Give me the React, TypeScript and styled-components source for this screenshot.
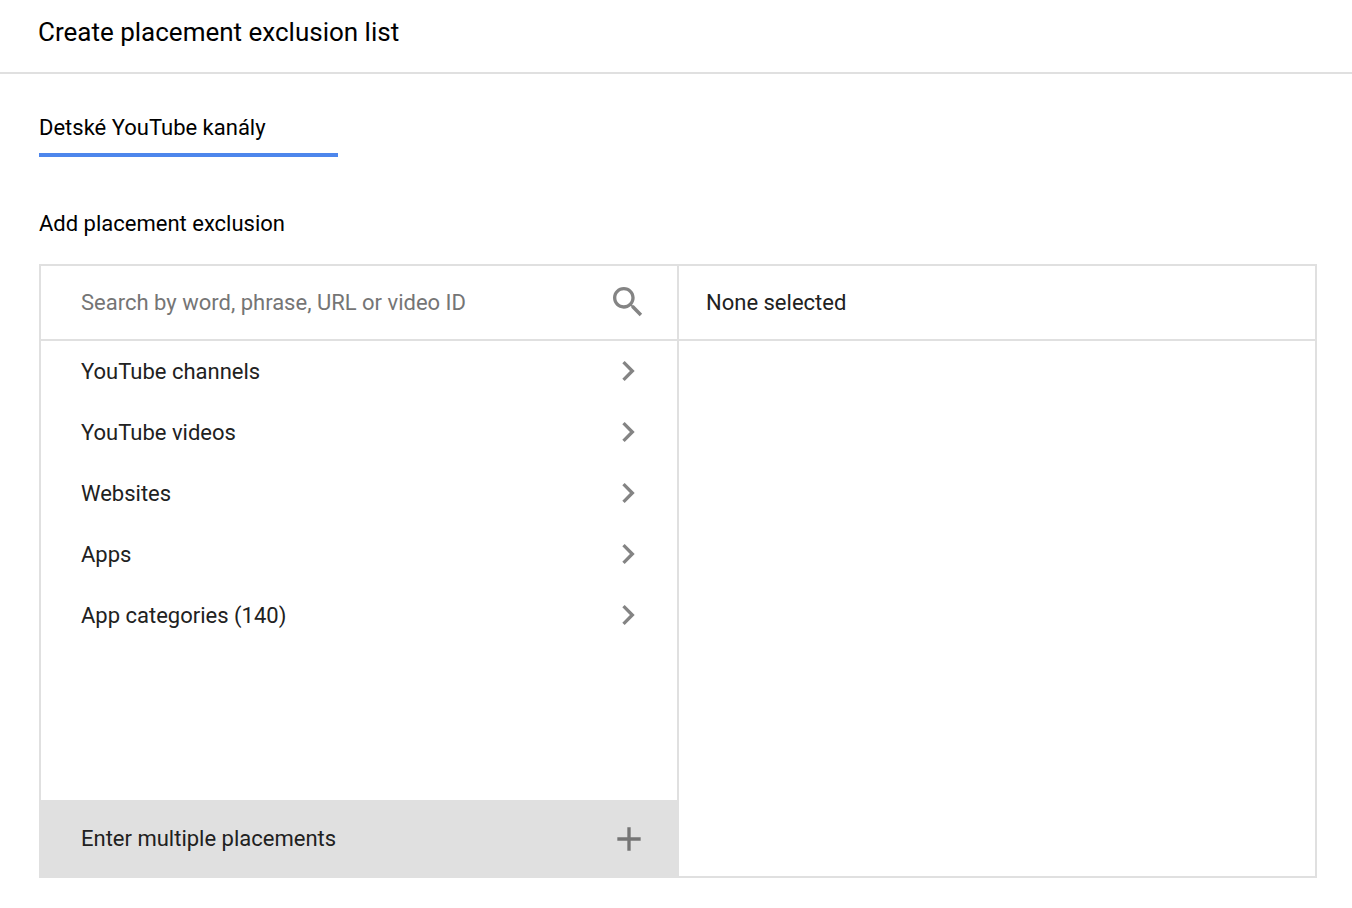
import React from "react";
import styled, { createGlobalStyle } from "styled-components";

const GlobalStyle = createGlobalStyle`
  *, *::before, *::after { box-sizing: border-box; }
  body { margin: 0; background: #fff; color: #212121; font-family: Roboto, sans-serif; font-size: 22px; line-height: 28px; }
  h1, h2, ul { margin: 0; padding: 0; }
  button, input { font: inherit; color: inherit; letter-spacing: inherit; }
`;

const Header = styled.header`
  padding: 16px 38px 24px;
  border-bottom: 2px solid #e0e0e0;
`;

const Title = styled.h1`
  color: #000;
  font-size: 26px;
  font-weight: 400;
  line-height: 32px;
`;

const Main = styled.main`
  padding: 35px 35px 30px 39px;
`;

const NameInput = styled.input`
  display: block;
  width: 299px;
  height: 48px;
  padding: 0 0 8px;
  border: 0;
  border-bottom: 4px solid #4d86ec;
  border-radius: 0;
  outline: none;
  background: transparent;
  color: #000;
`;

const SectionTitle = styled.h2`
  margin: 53px 0 26px;
  color: #000;
  font-size: 22px;
  font-weight: 400;
`;

const Picker = styled.section`
  display: grid;
  grid-template-columns: 1fr 1fr;
  gap: 2px;
  border: 2px solid #e0e0e0;
  background: #e0e0e0;
`;

const Pane = styled.div`
  display: flex;
  flex-direction: column;
  min-width: 0;
  background: #fff;
`;

const PaneHeader = styled.div<{ $inset: number }>`
  display: flex;
  align-items: center;
  height: 75px;
  padding: 0 29px 0 ${(p) => p.$inset}px;
  border-bottom: 2px solid #e0e0e0;
`;

const SearchInput = styled.input`
  flex: 1;
  min-width: 0;
  padding: 0;
  border: 0;
  outline: none;
  background: transparent;

  &::placeholder { color: #757575; opacity: 1; }
`;

const IconButton = styled.button`
  display: flex;
  padding: 0;
  border: 0;
  background: transparent;
  cursor: pointer;
`;

const Icon = styled.svg`
  display: block;
  flex: none;
  width: 40px;
  height: 40px;
  margin-bottom: 1px;
  fill: #848484;
`;

const Categories = styled.ul`
  flex: 1;
  min-height: 459px;
  list-style: none;
`;

const Row = styled.button`
  display: flex;
  align-items: center;
  justify-content: space-between;
  width: 100%;
  height: 61px;
  padding: 0 29px 0 40px;
  border: 0;
  background: transparent;
  text-align: left;
  cursor: pointer;
`;

const FooterRow = styled(Row)`
  height: 76px;
  padding-top: 2px;
  padding-right: 28px;
  background: #e0e0e0;

  ${Icon} { margin-bottom: 0; fill: #757575; }
`;

const categories = ["YouTube channels", "YouTube videos", "Websites", "Apps", "App categories (140)"];

export default function App() {
  return (
    <>
      <GlobalStyle />
      <Header>
        <Title>Create placement exclusion list</Title>
      </Header>
      <Main>
        <NameInput aria-label="List name" defaultValue="Detské YouTube kanály" />
        <SectionTitle id="picker-title">Add placement exclusion</SectionTitle>
        <Picker aria-labelledby="picker-title">
          <Pane>
            <PaneHeader $inset={40}>
              <SearchInput aria-label="Search placements" placeholder="Search by word, phrase, URL or video ID" />
              <IconButton type="button" aria-label="Search">
                <Icon viewBox="0 0 24 24" aria-hidden="true">
                  <path d="M15.5 14h-.79l-.28-.27C15.41 12.59 16 11.11 16 9.5 16 5.91 13.09 3 9.5 3S3 5.91 3 9.5 5.91 16 9.5 16c1.61 0 3.09-.59 4.23-1.57l.27.28v.79l5 4.99L20.49 19l-4.99-5zm-6 0C7.01 14 5 11.99 5 9.5S7.01 5 9.5 5 14 7.01 14 9.5 11.99 14 9.5 14z" />
                </Icon>
              </IconButton>
            </PaneHeader>
            <Categories>
              {categories.map((name) => (
                <li key={name}>
                  <Row type="button">
                    {name}
                    <Icon viewBox="0 0 24 24" aria-hidden="true">
                      <path d="M10 6 8.59 7.41 13.17 12l-4.58 4.59L10 18l6-6z" />
                    </Icon>
                  </Row>
                </li>
              ))}
            </Categories>
            <FooterRow type="button">
              Enter multiple placements
              <Icon viewBox="0 0 24 24" aria-hidden="true">
                <path d="M19 13h-6v6h-2v-6H5v-2h6V5h2v6h6v2z" />
              </Icon>
            </FooterRow>
          </Pane>
          <Pane>
            <PaneHeader $inset={27}>None selected</PaneHeader>
          </Pane>
        </Picker>
      </Main>
    </>
  );
}
